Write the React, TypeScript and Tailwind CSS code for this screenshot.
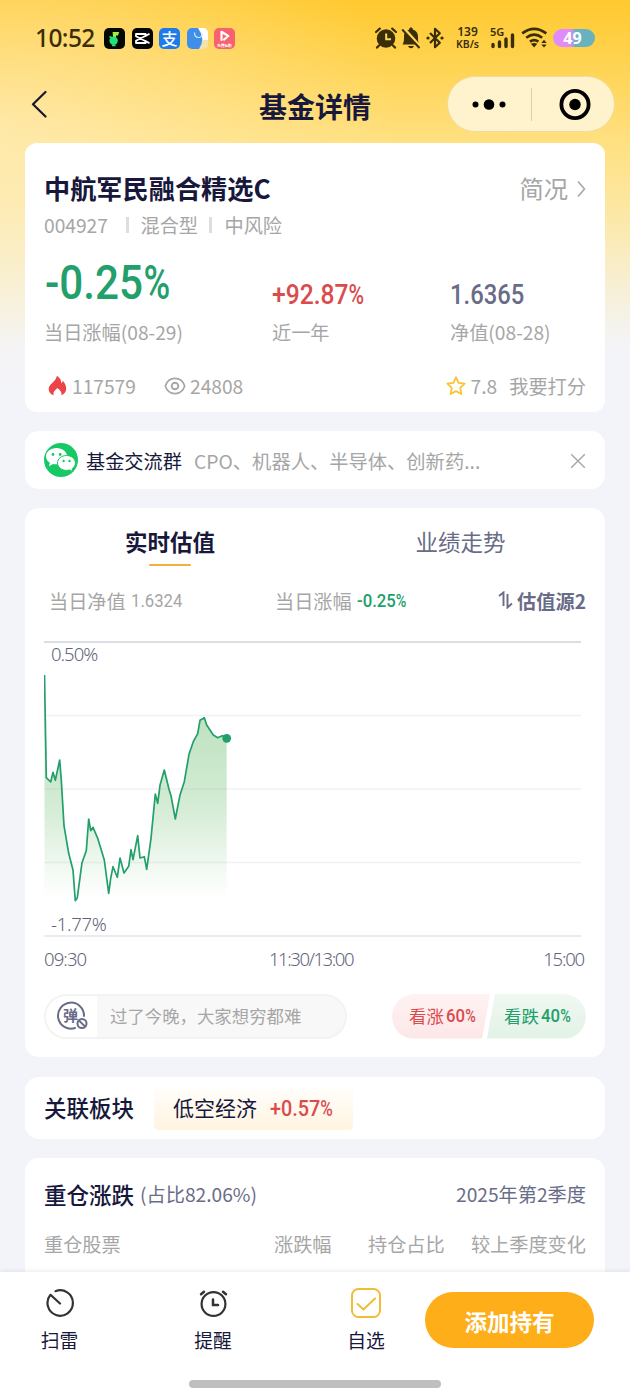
import React from "react";

const CURVE =
  "0.5,34 2.3,136.7 6.7,141 9,131.3 11.3,139.3 15.7,119 17.3,139 20,184.7 24.7,212.3 29,229 31.3,259.7 33.3,256.7 38,221.7 42.3,209.7 44.7,178 46.7,189.7 49,186.3 53.7,197.3 60.3,219 64.7,252.3 66.7,237.3 69,225.7 73.3,236.3 76,217 80,232 84.7,225.3 87,208.7 89,218.7 93.7,194.7 96,217 100.3,215.7 102.7,228.3 107,197.3 111.3,153 113.7,162.3 116,144.3 120.3,129 125,148.3 127,154.7 131.3,178 136,154 140.3,140.7 145,113.3 149.3,100.7 153.7,92.7 156,79.3 160.3,76.7 162.7,84 169.3,94 173.7,96.7 178.3,94.7 182.7,97.3";

const DIN = "inline-block origin-left whitespace-nowrap font-['Roboto',sans-serif] font-medium";

function Percent({ value, className }: { value: string; className: string }) {
  return (
    <span className={`${DIN} scale-x-[0.88] ${className}`}>
      {value}
      <span className="inline-block origin-left scale-x-[0.86]">%</span>
    </span>
  );
}

function StatusBar() {
  return (
    <div className="flex h-[76px] items-center pl-[35px] text-[#3a2e08]">
      <div className="w-[69px] font-['Noto_Sans',sans-serif] text-[24.5px] font-medium leading-none tracking-[-0.6px]">
        10:52
      </div>
      <div className="flex gap-[6.5px]">
        <svg width="21" height="21" viewBox="0 0 21 21">
          <rect width="21" height="21" rx="5" fill="#050805" />
          <path d="M8.600 4h6.600l-1.200 3.600h-2v4l-2.600.2z" fill="#a3f03c" />
          <circle cx="9.600" cy="12.800" r="4.200" fill="#25e07a" />
          <path d="M5.500 8.500l3.500 2M8 17.500h3.600" stroke="#25e07a" strokeWidth="1.600" />
        </svg>
        <svg width="21" height="21" viewBox="0 0 21 21">
          <rect width="21" height="21" rx="5" fill="#050505" />
          <path d="M17.500 5.800L13.600 8V6H4v2.200l13.500 7M17.500 15.200L13.600 13v2H4v-2.200l13.500-7" fill="none" stroke="#fff" strokeWidth="1.800" strokeLinejoin="round" />
        </svg>
        <div className="flex size-[21px] items-center justify-center rounded-[5px] bg-[#1e7bea] font-['Noto_Sans_CJK_SC',sans-serif] text-[16px] font-medium leading-none text-white">
          支
        </div>
        <svg width="21" height="21" viewBox="0 0 21 21">
          <defs>
            <clipPath id="tile"><rect width="21" height="21" rx="5" /></clipPath>
          </defs>
          <g clipPath="url(#tile)">
            <rect width="21" height="21" fill="#f3e2ae" />
            <rect x="8" width="13" height="12" fill="#fff" />
            <path d="M0 0h11q8 11 1 21H0z" fill="#3f8eea" />
            <path d="M7.500 4.500q0 5 4 5t3.500-4.500" fill="none" stroke="#cfe4ff" strokeWidth="1.200" />
          </g>
        </svg>
        <svg width="21" height="21" viewBox="0 0 21 21">
          <rect width="21" height="21" rx="5" fill="#f8616e" />
          <path d="M7.500 3.800v8.200M7.500 3.800l6.800 4.200-4.300 3.600" fill="none" stroke="#fff" strokeWidth="2.200" strokeLinecap="round" strokeLinejoin="round" />
          <text x="10.500" y="19" fontSize="3.600" textAnchor="middle" fill="#fff" fontFamily="Noto Sans CJK SC" fontWeight="700">免费短剧</text>
        </svg>
      </div>
      <svg className="ml-[140px] shrink-0" width="22" height="22" viewBox="0 0 22 22">
        <circle cx="11" cy="11.500" r="9.300" fill="currentColor" />
        <path d="M1 5L4.800 1.600M21 5l-3.800-3.400M4 18.400l-2 2.200M18 18.400l2 2.200" stroke="currentColor" strokeWidth="2.200" strokeLinecap="round" />
        <path d="M11.200 6.500v5.700h4.800" fill="none" stroke="#ffd75a" strokeWidth="2" />
      </svg>
      <svg className="ml-[4px] shrink-0" width="20" height="22" viewBox="0 0 20 22">
        <path d="M1.500 17.500C3 15 3 13 3 9.400c0-3.600 2.400-6 5-6.600C8.300 1.200 9 .6 10 .6s1.700.6 2 2.200c2.800.7 5 3.200 5 6.600 0 4 0 5.800 1.500 8.100z" fill="currentColor" />
        <path d="M7 19h6q-1 2.300-3 2.300T7 19z" fill="currentColor" />
        <path d="M2.200 1l16.500 18.500" stroke="#ffd458" strokeWidth="3.400" />
        <path d="M1.200 2.500l17.300 18.500" stroke="currentColor" strokeWidth="2" />
      </svg>
      <svg className="ml-[5px] shrink-0" width="18" height="22" viewBox="0 0 18 22">
        <path d="M4 6l9.800 9.800-4.800 4.400V1.800L13.800 6.200 4 16" fill="none" stroke="currentColor" strokeWidth="2.200" strokeLinejoin="round" />
        <circle cx="2" cy="11" r="1.600" fill="currentColor" />
        <circle cx="16" cy="11" r="1.600" fill="currentColor" />
      </svg>
      <div className="ml-[8px] w-[31px] shrink-0 text-center font-['Noto_Sans',sans-serif] text-[12px] font-semibold leading-[12px]">
        <div className="h-[12px] leading-[11px]">139</div>
        <div className="h-[12px] text-[10.5px] leading-[13px]">KB/s</div>
      </div>
      <div className="ml-[6px] flex h-[22px] w-[27px] shrink-0 flex-col font-['Noto_Sans',sans-serif]">
        <div className="h-[8px] pl-px text-[11px] font-semibold leading-[9px]">5G</div>
        <svg className="-mt-[2px] shrink-0" width="27" height="16" viewBox="0 0 27 16">
          <path d="M4 11.500v2M10.500 9V13.500M17 6v7.500M23.500 2V13.500" stroke="currentColor" strokeWidth="3.400" strokeLinecap="round" />
        </svg>
      </div>
      <svg className="ml-[5px] shrink-0" width="27" height="22" viewBox="0 0 27 22">
        <path d="M1.200 6.400Q13 -2.700 25.300 6.400M5.200 10.800q8-6.300 16 0M9 14.600q4.200-3 8.400 0" fill="none" stroke="currentColor" strokeWidth="2.600" />
        <path d="M9.900 16.800q3.300-1.600 6.400 0l-3.200 3.700z" fill="currentColor" />
        <path d="M20.300 15.900l2.700-3.200 2.700 3.200zM20.300 17.400l2.700 3.200 2.700-3.200z" fill="currentColor" />
      </svg>
      <div className="ml-[5px] flex h-[18px] w-[42px] shrink-0 items-center justify-center rounded-full bg-[linear-gradient(90deg,#df8bfa_0%,#df8bfa_42%,#68b2c0_54%,#68b2c0_100%)] pr-[3px] font-['Noto_Sans',sans-serif] text-[16px] font-bold leading-none text-white">
        49
      </div>
    </div>
  );
}

function NavBar() {
  return (
    <div className="flex h-[67px] items-start">
      <svg className="ml-[31px] mt-[14px]" width="17" height="28" viewBox="0 0 17 28">
        <path d="M14.500 2L2 14.200 14.500 26.500" fill="none" stroke="#17172e" strokeWidth="2.200" strokeLinecap="round" strokeLinejoin="round" />
      </svg>
      <h1 className="ml-[211px] mt-[10px] w-[112px] whitespace-nowrap text-[28px] font-bold leading-[40px] text-[#17183b]">基金详情</h1>
      <div className="ml-[76px] flex h-[56px] w-[168px] items-center rounded-full border border-[#eedd9f] bg-[#fff3cd]">
        <svg width="83" height="54" viewBox="0 0 83 54">
          <circle cx="27.500" cy="27.500" r="3" />
          <circle cx="41" cy="27.500" r="5.300" />
          <circle cx="54.500" cy="27.500" r="3" />
        </svg>
        <div className="h-[33px] w-px bg-[#ddd0a4]" />
        <svg width="82" height="54" viewBox="0 0 82 54">
          <circle cx="43" cy="27.500" r="13.600" fill="none" stroke="#000" strokeWidth="3.800" />
          <circle cx="43" cy="27.500" r="5.700" />
        </svg>
      </div>
    </div>
  );
}

function FundCard() {
  return (
    <section className="flex h-[269px] flex-col rounded-[12px] bg-white px-[19px] text-[19.2px] text-[#a6a6a6]">
      <div className="mt-[25px] flex h-[40px] items-center justify-between">
        <h2 className="whitespace-nowrap text-[26.2px] font-bold leading-[40px] text-[#17183b]">中航军民融合精选C</h2>
        <div className="flex items-center text-[24.3px] leading-[40px]">
          简况
          <svg className="-mr-px ml-[8px] mt-[2px]" width="11" height="20" viewBox="0 0 11 20">
            <path d="M2 2.500l6.500 7.500L2 17.500" fill="none" stroke="#a6a6a6" strokeWidth="1.600" />
          </svg>
        </div>
      </div>
      <div className="flex h-[34px] items-center leading-[35px]">
        <span className="w-[82px]">004927</span>
        <span className="mr-[12px] h-[16px] w-[2.500px] bg-[#dedede]" />
        <span className="w-[68.500px]">混合型</span>
        <span className="mr-[13px] h-[16px] w-[2.500px] bg-[#dedede]" />
        <span>中风险</span>
      </div>
      <div className="flex h-[71px] items-end leading-none">
        <div className="w-[228px] pl-px text-[#229f6b]">
          <Percent value="-0.25" className="text-[48px] leading-[60px]" />
        </div>
        <div className="w-[178px] text-[#db4b4e]">
          <Percent value="+92.87" className="text-[28px] leading-[37px]" />
        </div>
        <div className="text-[#686c87]">
          <span className={`${DIN} scale-x-[0.85] text-[28px] leading-[37px]`}>1.6365</span>
        </div>
      </div>
      <div className="mt-[2px] flex h-[34px] leading-[34px]">
        <span className="w-[228px]">当日涨幅(08-29)</span>
        <span className="w-[178px]">近一年</span>
        <span>净值(08-28)</span>
      </div>
      <div className="mt-[19px] flex h-[36px] items-center leading-[36px]">
        <svg className="ml-[4px] mr-[5px]" width="19" height="22" viewBox="0 0 19 22">
          <path d="M9 .8c3.500 2.500 4.500 5 4.200 7.500 1-.6 1.400-1.500 1.500-2.800 2.600 3 3.500 5.800 3.500 8.300 0 3.200-2 5.600-4.800 6.500.6-2.700-.5-4.400-3.900-7.300-3.500 2.900-4.500 4.700-3.800 7.300C2.800 19.500.7 17.200.7 14c0-5.200 6.700-6.500 8.300-13.200z" fill="#ed4547" />
        </svg>
        <span className="w-[92px]">117579</span>
        <svg className="mr-[4px]" width="22" height="18" viewBox="0 0 22 18">
          <path d="M1.300 9C3 3.800 7 1.400 11 1.400S19 3.800 20.700 9C19 14.200 15 16.600 11 16.600S3 14.200 1.300 9z" fill="none" stroke="#a6a6a6" strokeWidth="1.700" strokeLinejoin="round" />
          <circle cx="11" cy="9" r="3.300" fill="none" stroke="#a6a6a6" strokeWidth="1.900" />
        </svg>
        <span>24808</span>
        <span className="flex-1" />
        <svg className="mr-[5px]" width="20" height="20" viewBox="0 0 20 20">
          <path d="M10 1.300l2.600 5.600 6.100.7-4.500 4.200 1.200 6.200-5.400-2.900-5.400 2.900 1.200-6.200L1.300 7.600l6.100-.7z" fill="none" stroke="#f9c431" strokeWidth="1.800" strokeLinejoin="round" />
        </svg>
        <span className="mr-[12px]">7.8</span>
        <span>我要打分</span>
      </div>
    </section>
  );
}

function GroupCard() {
  return (
    <section className="mt-[19px] flex h-[58px] items-center rounded-[14px] bg-white px-[19px] text-[19.2px]">
      <svg width="34" height="34" viewBox="0 0 34 34">
        <circle cx="17" cy="17" r="17" fill="#17c964" />
        <path d="M12.500 5C6.500 5 2 8.700 2 13.300c0 2.700 1.500 5 3.900 6.500L5 23.300l4-2.200c4 1 14-1 14-7.800C23 8.700 18.500 5 12.500 5z" fill="#fff" />
        <path d="M22.500 12.500c-5 0-9 3.300-9 7.400s4 7.500 9 7.500c1.100 0 2.200-.2 3.200-.5l3.200 1.800-.8-2.900c2-1.400 3.300-3.500 3.300-5.900 0-4.100-4-7.400-8.900-7.400z" fill="#fff" stroke="#17c964" strokeWidth="1" />
        <circle cx="9" cy="11.500" r="1.400" fill="#17c964" />
        <circle cx="16.200" cy="11.500" r="1.400" fill="#17c964" />
        <circle cx="19.600" cy="18" r="1.200" fill="#17c964" />
        <circle cx="25.500" cy="18" r="1.200" fill="#17c964" />
      </svg>
      <span className="ml-[8px] mt-[2px] w-[108px] whitespace-nowrap text-[#17183b]">基金交流群</span>
      <span className="mt-[2px] whitespace-nowrap text-[19.300px] text-[#a6a6a6]">CPO、机器人、半导体、创新药...</span>
      <svg className="ml-auto mt-[2px]" width="16" height="16" viewBox="0 0 16 16">
        <path d="M1.200 1.200l13.600 13.600M14.800 1.200l-13.600 13.600" stroke="#a6a6a6" strokeWidth="1.400" />
      </svg>
    </section>
  );
}

function Chart() {
  return (
    <div className="relative h-[296px]">
      <svg width="542" height="296" viewBox="0 0 542 296">
        <defs>
          <linearGradient id="area" x1="0" y1="75" x2="0" y2="256" gradientUnits="userSpaceOnUse">
            <stop offset="0" stopColor="#4caf50" stopOpacity="0.36" />
            <stop offset="0.5" stopColor="#4caf50" stopOpacity="0.24" />
            <stop offset="1" stopColor="#4caf50" stopOpacity="0" />
          </linearGradient>
        </defs>
        <path d="M0 74.500H537M0 148H537M0 221.500H537" stroke="#f1f2f4" strokeWidth="1.500" />
        <path d="M0 1H537" stroke="#cfd3d9" strokeWidth="1.500" />
        <path d="M0 295H537" stroke="#e2e4e8" strokeWidth="1.500" />
        <polygon points={`0.5,256 ${CURVE} 182.7,256`} fill="url(#area)" />
        <polyline points={CURVE} fill="none" stroke="#229f6b" strokeWidth="1.700" strokeLinejoin="round" />
        <circle cx="182.700" cy="97.300" r="4.400" fill="#229f6b" />
      </svg>
      <span className="absolute left-[7px] top-[1px] text-[18.5px] leading-[24px] tracking-[-1px]">0.50%</span>
      <span className="absolute left-[7px] top-[271px] text-[18.5px] leading-[24px] tracking-[-0.3px]">-1.77%</span>
    </div>
  );
}

function EstimateCard() {
  return (
    <section className="mt-[19px] h-[549px] rounded-[14px] bg-white px-[19px]">
      <div className="flex h-[65px] text-[22.5px] leading-[66px]">
        <div className="flex w-1/2 flex-col items-center pr-[19px]">
          <div className="h-[55.500px] font-bold text-[#17183b]">实时估值</div>
          <div className="h-[2.500px] w-[42px] rounded-full bg-[#f0b03a]" />
        </div>
        <div className="w-1/2 pl-[20px] text-center text-[#686c87]">业绩走势</div>
      </div>
      <div className="flex h-[68px] items-center pl-[5px] text-[19.2px] leading-[36px] text-[#a6a6a6]">
        <div className="flex h-[48px] w-[226px] whitespace-nowrap">
          当日净值
          <span className={`${DIN} ml-[5px] h-[36px] scale-x-[0.88] text-[19px] font-normal leading-[35px]`}>1.6324</span>
        </div>
        <div className="flex h-[48px] whitespace-nowrap">
          当日涨幅
          <Percent value="-0.25" className="ml-[5px] h-[36px] text-[19px] leading-[35px] text-[#229f6b]" />
        </div>
        <div className="ml-auto flex h-[48px] items-start font-bold text-[#686c87]">
          <svg className="mr-[3px] mt-[8px]" width="16" height="18" viewBox="0 0 16 18">
            <path d="M1 5L5.500 1.500V15M9.500 3v13.500l4.500-4" fill="none" stroke="#686c87" strokeWidth="1.900" />
          </svg>
          估值源2
        </div>
      </div>
      <div className="font-['Noto_Sans',sans-serif] font-[350] text-[#62657a]">
        <Chart />
        <div className="flex h-[46px] justify-between text-[18.500px] leading-[44px] tracking-[-0.900px]">
          <span className="w-[60px]">09:30</span>
          <span className="-ml-[11px] tracking-[-1.450px]">11:30/13:00</span>
          <span className="w-[57px] pr-[2px] text-right tracking-[-1.200px]">15:00</span>
        </div>
      </div>
      <div className="mt-[10px] flex h-[46px] items-center justify-between text-[17.400px]">
        <div className="flex h-[45px] w-[303px] items-center overflow-hidden rounded-full border-2 border-[#f3f3f4] bg-[#f8f8f8]">
          <div className="flex h-full w-[51px] items-center bg-white pl-[9px]">
            <svg width="34" height="34" viewBox="0 0 34 34">
              <path d="M29 17A13 13 0 1 0 20 29" fill="none" stroke="#686c87" strokeWidth="2" strokeLinecap="round" />
              <text x="15.500" y="21.500" textAnchor="middle" fontSize="15" fontWeight="700" fontFamily="Noto Sans CJK SC" fill="#686c87">弹</text>
              <circle cx="27" cy="24.500" r="4.500" fill="#fff" stroke="#686c87" strokeWidth="2" />
              <path d="M24 21.500l6 6" stroke="#686c87" strokeWidth="1.800" />
            </svg>
          </div>
          <span className="ml-[13px] whitespace-nowrap text-[#a6a6a6]">过了今晚，大家想穷都难</span>
        </div>
        <div className="flex h-[45px] w-[194px] overflow-hidden rounded-full">
          <div className="flex w-[98px] whitespace-nowrap bg-[linear-gradient(180deg,#fff2f2,#fde7e7)] pl-[17px] leading-[44px] text-[#db4b4e] [clip-path:polygon(0_0,100%_0,92%_100%,0_100%)]">
            看涨
            <Percent value="60" className="ml-[2px] text-[19px] leading-[43px]" />
          </div>
          <div className="-ml-[3px] flex w-[99px] whitespace-nowrap bg-[linear-gradient(180deg,#f0f8f2,#e2f2e6)] pl-[17px] leading-[44px] text-[#229f6b] [clip-path:polygon(8%_0,100%_0,100%_100%,0_100%)]">
            看跌
            <Percent value="40" className="ml-[2px] text-[19px] leading-[43px]" />
          </div>
        </div>
      </div>
    </section>
  );
}

function SectorCard() {
  return (
    <section className="mt-[20px] flex h-[62px] items-center rounded-[14px] bg-white px-[19px]">
      <span className="w-[110px] text-[22.500px] font-medium text-[#17183b]">关联板块</span>
      <div className="flex h-[43px] w-[199px] items-center rounded-[4px] bg-[linear-gradient(180deg,#fffefc,#fff4e0)] pl-[19px]">
        <span className="w-[97px] text-[21px] text-[#17183b]">低空经济</span>
        <Percent value="+0.57" className="text-[22.500px] leading-[40px] text-[#db4b4e]" />
      </div>
    </section>
  );
}

function HoldingsCard() {
  return (
    <section className="mt-[19px] h-[114px] rounded-t-[14px] bg-white px-[19px] text-[19.200px]">
      <div className="flex h-[73px] items-center text-[#686c87]">
        <span className="text-[22.500px] font-medium text-[#17183b]">重仓涨跌</span>
        <span className="ml-[6px]">(占比82.06%)</span>
        <span className="ml-auto">2025年第2季度</span>
      </div>
      <div className="flex h-[26px] items-center text-[#a6a6a6]">
        <span className="w-[230px]">重仓股票</span>
        <span className="w-[94px]">涨跌幅</span>
        <span>持仓占比</span>
        <span className="ml-auto">较上季度变化</span>
      </div>
    </section>
  );
}

function BottomBar() {
  return (
    <footer className="flex h-[128px] flex-col bg-white shadow-[0_-1px_4px_rgba(60,60,100,0.1)]">
      <div className="flex h-[100px] text-[18.800px] leading-[32px] text-[#17183b]">
        <div className="ml-[29px] flex w-[61px] flex-col items-center pt-[16px]">
          <svg width="30" height="30" viewBox="0 0 30 30">
            <path d="M10.500 3.200A12.700 12.700 0 1 1 5.500 6.800L15 15.500" fill="none" stroke="#333" strokeWidth="2.200" strokeLinecap="round" strokeLinejoin="round" />
          </svg>
          <span className="mt-[6px]">扫雷</span>
        </div>
        <div className="ml-[92px] flex w-[62px] flex-col items-center pt-[16px]">
          <svg width="30" height="30" viewBox="0 0 30 30">
            <circle cx="15.500" cy="16" r="11.900" fill="none" stroke="#333" strokeWidth="2.200" />
            <path d="M15 11.500v5.500h5M3 6.200L6 3.700M28 6.200L25 3.700" fill="none" stroke="#333" strokeWidth="2.500" strokeLinecap="round" />
          </svg>
          <span className="mt-[6px]">提醒</span>
        </div>
        <div className="ml-[91px] flex w-[62px] flex-col items-center pt-[16px]">
          <svg width="30" height="30" viewBox="0 0 30 30">
            <rect x="1" y="1" width="28" height="28" rx="6.500" fill="none" stroke="#f0bd38" strokeWidth="2" />
            <path d="M6.500 16l6 5.500L24 10.500" fill="none" stroke="#f0bd38" strokeWidth="2" strokeLinecap="round" strokeLinejoin="round" />
          </svg>
          <span className="mt-[6px]">自选</span>
        </div>
        <button className="ml-[28px] mt-[20px] flex h-[56px] w-[169px] items-center justify-center rounded-full bg-[#fdae18] pt-px text-[22.500px] font-bold text-white">
          添加持有
        </button>
      </div>
      <div className="mx-auto mt-[8px] h-[8px] w-[252px] rounded-full bg-[#bfbfbf]" />
    </footer>
  );
}

export default function App() {
  return (
    <div className="flex h-[1400px] w-[630px] flex-col overflow-hidden bg-[#f3f4fa] bg-[radial-gradient(ellipse_400px_280px_at_0px_130px,rgba(255,243,214,0.5),rgba(255,243,214,0)),linear-gradient(180deg,#ffc92f_0px,#ffd558_75px,#ffe183_145px,#fce7a3_210px,#f8eecb_270px,#f3f4fa_350px)] font-['Noto_Sans_CJK_SC',sans-serif]">
      <StatusBar />
      <NavBar />
      <main className="h-[1129px] px-[25px]">
        <FundCard />
        <GroupCard />
        <EstimateCard />
        <SectorCard />
        <HoldingsCard />
      </main>
      <BottomBar />
    </div>
  );
}
